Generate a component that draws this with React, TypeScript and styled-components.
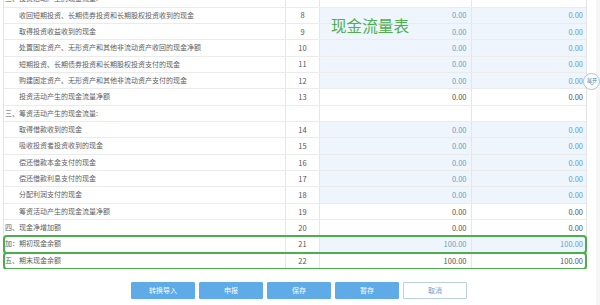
import React from 'react';
import styled, { createGlobalStyle } from 'styled-components';

const GlobalStyle = createGlobalStyle`
  html, body { margin: 0; padding: 0; background: #ffffff; }
  body { font-family: "Noto Sans CJK SC", "Noto Sans", sans-serif; }
  * { box-sizing: border-box; }
`;

type Kind = 'header' | 'edit' | 'calc';
interface Row {
  label: string;
  no?: string;
  kind: Kind;
  indent: boolean;
  v1?: string;
  v2?: string;
  mark?: boolean;
}

const rows: Row[] = [
  { label: '二、投资活动产生的现金流量:', kind: 'header', indent: false },
  { label: '收回短期投资、长期债券投资和长期股权投资收到的现金', no: '8', kind: 'edit', indent: true },
  { label: '取得投资收益收到的现金', no: '9', kind: 'edit', indent: true },
  { label: '处置固定资产、无形资产和其他非流动资产收回的现金净额', no: '10', kind: 'edit', indent: true },
  { label: '短期投资、长期债券投资和长期股权投资支付的现金', no: '11', kind: 'edit', indent: true },
  { label: '购建固定资产、无形资产和其他非流动资产支付的现金', no: '12', kind: 'edit', indent: true },
  { label: '投资活动产生的现金流量净额', no: '13', kind: 'calc', indent: true },
  { label: '三、筹资活动产生的现金流量:', kind: 'header', indent: false },
  { label: '取得借款收到的现金', no: '14', kind: 'edit', indent: true },
  { label: '吸收投资者投资收到的现金', no: '15', kind: 'edit', indent: true },
  { label: '偿还借款本金支付的现金', no: '16', kind: 'edit', indent: true },
  { label: '偿还借款利息支付的现金', no: '17', kind: 'edit', indent: true },
  { label: '分配利润支付的现金', no: '18', kind: 'edit', indent: true },
  { label: '筹资活动产生的现金流量净额', no: '19', kind: 'calc', indent: true },
  { label: '四、现金净增加额', no: '20', kind: 'calc', indent: false },
  { label: '加：期初现金余额', no: '21', kind: 'edit', indent: false, v1: '100.00', v2: '100.00', mark: true },
  { label: '五、期末现金余额', no: '22', kind: 'calc', indent: false, v1: '100.00', v2: '100.00', mark: true },
];

const Page = styled.div`
  display: flex;
  width: 600px;
  height: 305px;
  overflow: hidden;
  background: #f6f6f7;
`;

const Panel = styled.div`
  position: relative;
  width: 596px;
  flex: none;
  background: #ffffff;
  display: flex;
  flex-direction: column;
`;

const Viewport = styled.div`
  height: 269px;
  overflow: hidden;
  padding-left: 3px;
`;

const Table = styled.div`
  width: 584px;
  margin-top: -8.85px;
  border-left: 1px solid #e4e4e4;
  border-right: 1px solid #e4e4e4;
`;

const TableRow = styled.div<{ $mark?: boolean }>`
  display: grid;
  grid-template-columns: 282px 34px 151.5px 1fr;
  height: 16.35px;
  border-bottom: 1px solid #ebebeb;
  ${(p) =>
    p.$mark
      ? `
    position: relative;
    z-index: 1;
    outline: 2px solid #4cae4c;
    outline-offset: -1px;
    border-radius: 3px;
  `
      : ''}
`;

const Cell = styled.div`
  display: flex;
  align-items: center;
  border-right: 1px solid #e6e6e6;
  font-size: 7px;
  line-height: 1;
  white-space: nowrap;
  overflow: hidden;
  &:last-child { border-right: none; }
`;

const LabelCell = styled(Cell)<{ $indent: boolean }>`
  padding-left: ${(p) => (p.$indent ? '15px' : '1px')};
  color: #5e5e5e;
`;

const NoCell = styled(Cell)`
  justify-content: center;
  color: #555555;
  font-size: 7.5px;
`;

const ValueCell = styled(Cell)<{ $edit: boolean; $pad: number }>`
  justify-content: flex-end;
  padding-right: ${(p) => p.$pad}px;
  font-size: 7.5px;
  background: ${(p) => (p.$edit ? '#eef5fc' : '#ffffff')};
  color: ${(p) => (p.$edit ? '#6a9fc0' : '#555555')};
`;

const Title = styled.div`
  position: absolute;
  left: 331px;
  top: 18px;
  font-size: 15.6px;
  line-height: 1;
  color: #4fae4f;
  letter-spacing: 0;
  pointer-events: none;
`;

const Toggle = styled.div`
  position: absolute;
  left: 583px;
  top: 73px;
  width: 17px;
  height: 17px;
  border-radius: 50%;
  border: 1px solid #a8c4d8;
  background: #ffffff;
  display: flex;
  flex-direction: column;
  align-items: center;
  justify-content: center;
  color: #4a8cb4;
`;

const ToggleText = styled.span`
  font-size: 10px;
  line-height: 1;
  transform: scale(0.5);
  margin: -2px 0 -3px;
  white-space: nowrap;
`;

const Actions = styled.div`
  display: flex;
  justify-content: center;
  gap: 4px;
  margin-top: 13px;
  padding-left: 2px;
`;

const Button = styled.button<{ $ghost?: boolean }>`
  width: 64px;
  height: 17px;
  padding: 0;
  border-radius: 1px;
  font-family: inherit;
  font-size: 7px;
  line-height: 1;
  border: 1px solid ${(p) => (p.$ghost ? '#b9cfe2' : '#5eabe8')};
  background: ${(p) => (p.$ghost ? '#ffffff' : '#5eabe8')};
  color: ${(p) => (p.$ghost ? '#6d9dc8' : '#ffffff')};
`;

export default function App() {
  return (
    <>
      <GlobalStyle />
      <Page>
        <Panel>
          <Viewport>
            <Table>
              {rows.map((r, i) => {
                const showValues = r.kind !== 'header';
                const edit = r.kind === 'edit';
                return (
                  <TableRow key={i} $mark={r.mark}>
                    <LabelCell $indent={r.indent}>{r.label}</LabelCell>
                    <NoCell>{r.no ?? ''}</NoCell>
                    <ValueCell $edit={edit} $pad={4}>
                      {showValues ? r.v1 ?? '0.00' : ''}
                    </ValueCell>
                    <ValueCell $edit={edit} $pad={3}>
                      {showValues ? r.v2 ?? '0.00' : ''}
                    </ValueCell>
                  </TableRow>
                );
              })}
            </Table>
          </Viewport>
          <Actions>
            <Button>转换导入</Button>
            <Button>申报</Button>
            <Button>保存</Button>
            <Button>暂存</Button>
            <Button $ghost>取消</Button>
          </Actions>
          <Title>现金流量表</Title>
          <Toggle>
            <ToggleText>展开</ToggleText>
            <svg width="6" height="4" viewBox="0 0 6 4">
              <polyline points="0.5,0.8 3,3.2 5.5,0.8" fill="none" stroke="#6a9fc0" strokeWidth="0.8" />
            </svg>
          </Toggle>
        </Panel>
      </Page>
    </>
  );
}
